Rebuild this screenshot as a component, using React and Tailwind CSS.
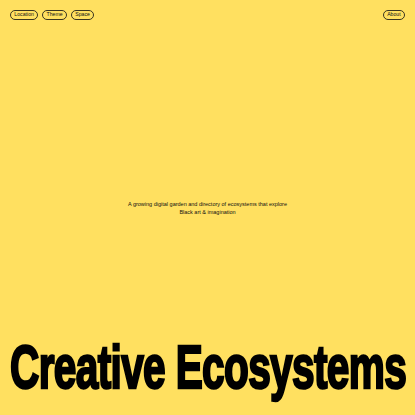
export default function App() {
  const tags = ["Location", "Theme", "Space"];

  return (
    <div className="h-[415px] w-full overflow-hidden bg-[#ffe060] text-[#111] font-['Liberation_Sans',Arial,sans-serif] grid grid-cols-[minmax(0,1fr)] grid-rows-[1fr_auto_1fr]">
      {/* Top nav */}
      <div className="flex items-start justify-between px-[10px] pt-[10px]">
        <div className="flex gap-[4px]">
          {tags.map((tag) => (
            <button
              key={tag}
              className="h-[10px] px-[3.3px] rounded-full border-[0.8px] border-[#3a3520] text-[5.2px] leading-none flex items-center"
            >
              {tag}
            </button>
          ))}
        </div>
        <button className="h-[10px] px-[3.3px] rounded-full border-[0.8px] border-[#3a3520] text-[5.2px] leading-none flex items-center">
          About
        </button>
      </div>

      {/* Intro */}
      <p className="text-center text-[5.5px] leading-[8px]">
        A growing digital garden and directory of ecosystems that explore
        <br />
        Black art &amp; imagination
      </p>

      {/* Title */}
      <div className="flex items-end overflow-hidden pb-[23px] pl-[10px]">
        <h1 className="origin-left scale-x-[0.655] whitespace-nowrap text-[62px] font-bold leading-[50px] tracking-[-1px] [-webkit-text-stroke:2.5px_#000] text-black">
          Creative Ecosystems
        </h1>
      </div>
    </div>
  );
}
